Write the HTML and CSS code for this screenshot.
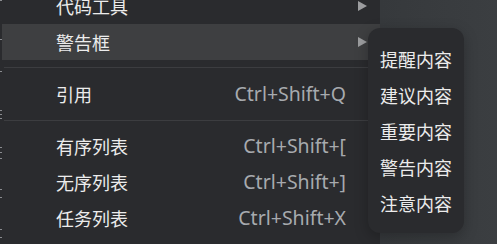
FILE: index.html
```html
<!DOCTYPE html>
<html lang="zh-CN">
<head>
<meta charset="utf-8">
<title>菜单</title>
<link rel="stylesheet" href="styles.css">
</head>
<body>
<div class="screen">
  <div class="gutter">
    <span class="tick" style="top:0px"></span>
    <span class="tick" style="top:39px"></span>
    <span class="tick" style="top:71px"></span>
    <span class="tick" style="top:110px"></span>
    <span class="tick" style="top:114px"></span>
    <span class="tick" style="top:118px"></span>
    <span class="tick" style="top:147px"></span>
    <span class="tick" style="top:152px"></span>
    <span class="tick" style="top:158px"></span>
    <span class="tick" style="top:189px"></span>
    <span class="tick" style="top:197px"></span>
    <span class="tick" style="top:229px"></span>
    <span class="tick" style="top:237px"></span>
  </div>
  <div class="menu">
    <div class="item">
      <span class="label">代码工具</span>
      <span class="arrow"></span>
    </div>
    <div class="item active">
      <span class="label">警告框</span>
      <span class="arrow"></span>
    </div>
    <div class="sep"></div>
    <div class="item">
      <span class="label">引用</span>
      <span class="key">Ctrl+Shift+Q</span>
    </div>
    <div class="sep sep-b"></div>
    <div class="item">
      <span class="label">有序列表</span>
      <span class="key">Ctrl+Shift+[</span>
    </div>
    <div class="item">
      <span class="label">无序列表</span>
      <span class="key">Ctrl+Shift+]</span>
    </div>
    <div class="item">
      <span class="label">任务列表</span>
      <span class="key">Ctrl+Shift+X</span>
    </div>
  </div>
  <div class="backdrop"></div>
  <div class="submenu">
    <div class="sub-item">提醒内容</div>
    <div class="sub-item">建议内容</div>
    <div class="sub-item">重要内容</div>
    <div class="sub-item">警告内容</div>
    <div class="sub-item">注意内容</div>
  </div>
</div>
</body>
</html>
```

FILE: styles.css
```css
html, body {
  margin: 0;
  padding: 0;
}
body {
  background: #2a2b2e;
  font-family: "Noto Sans", "Noto Sans CJK SC", sans-serif;
}
.screen {
  position: relative;
  width: 497px;
  height: 244px;
  overflow: hidden;
  display: flex;
}
.gutter {
  position: relative;
  width: 2px;
  flex: none;
  background: #2a2b2e;
}
.tick {
  position: absolute;
  left: 0;
  width: 2px;
  height: 1px;
  background: #8a8c90;
}
.menu {
  width: 378px;
  flex: none;
  background: #2a2b2e;
  margin-top: -12px;
  display: flex;
  flex-direction: column;
  align-self: flex-start;
}
.item {
  height: 36px;
  display: flex;
  align-items: center;
  justify-content: space-between;
  padding: 0 34px 0 54px;
}
.item .arrow {
  margin-right: -21px;
  width: 0;
  height: 0;
  border-top: 5.5px solid transparent;
  border-bottom: 5.5px solid transparent;
  border-left: 9px solid #9c9d9f;
}
.item.active {
  background: #3e3f41;
}
.label {
  font-family: "Noto Sans CJK SC", sans-serif;
  font-size: 18px;
  color: #ececec;
  line-height: 1;
}
.key {
  font-family: "Noto Sans", "Noto Sans CJK SC", sans-serif;
  font-size: 19.5px;
  color: #a7aaae;
  line-height: 1;
}
.sep {
  height: 1px;
  margin: 7px 0 8px 2px;
  background: #3c3d40;
}
.sep-b {
  margin: 8px 0 7px 2px;
}
.backdrop {
  flex: 1;
  background: linear-gradient(90deg, #36393c, #3b3e41);
}
.submenu {
  position: absolute;
  left: 368px;
  top: 28px;
  width: 96px;
  height: 205px;
  box-sizing: border-box;
  padding: 13px 0 11px;
  background: #2a2b2e;
  border-radius: 12px;
  box-shadow: 0 4px 14px rgba(0, 0, 0, 0.25);
  display: flex;
  flex-direction: column;
}
.sub-item {
  height: 36px;
  display: flex;
  align-items: center;
  padding-left: 12px;
  font-family: "Noto Sans CJK SC", sans-serif;
  font-size: 18px;
  color: #ececec;
  line-height: 1;
}
```
